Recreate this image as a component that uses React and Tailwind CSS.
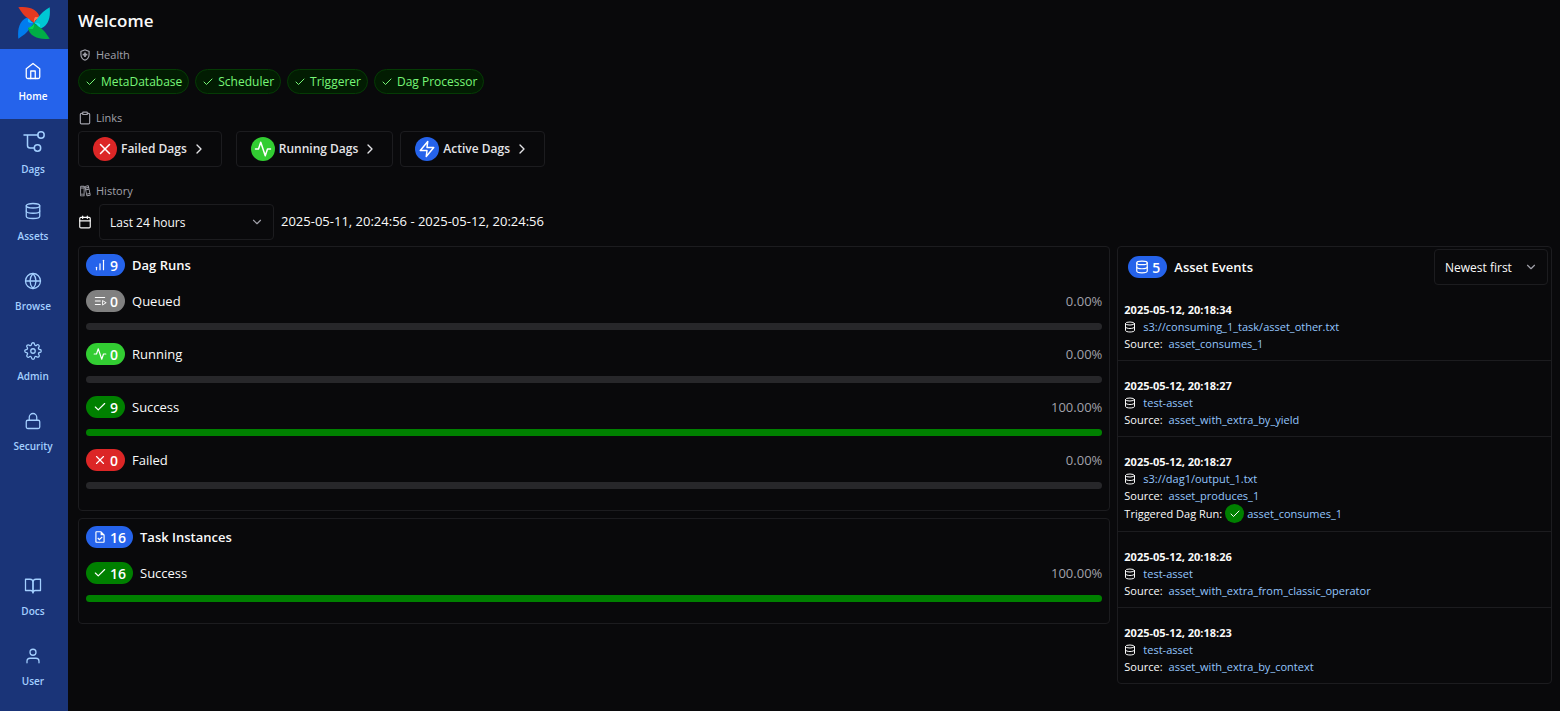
import React from "react";
import {
  FiHome,
  FiDatabase,
  FiGlobe,
  FiSettings,
  FiLock,
  FiBookOpen,
  FiUser,
  FiClipboard,
  FiX,
  FiActivity,
  FiZap,
  FiCheck,
  FiChevronRight,
  FiChevronDown,
  FiCalendar,
  FiBarChart,
} from "react-icons/fi";
import { MdOutlineHealthAndSafety, MdOutlineTask } from "react-icons/md";
import { PiBooks, PiQueue } from "react-icons/pi";

const blades = [
  { angle: 270, fill: "#017cee", tip: "#0cb6ff" },
  { angle: 0, fill: "#e43921", tip: "#ff7557" },
  { angle: 90, fill: "#00c7d4", tip: "#11e1ee" },
  { angle: 180, fill: "#00ad46", tip: "#04d659" },
];

const Logo = () => (
  <svg viewBox="0 0 96 96" className="size-8" aria-label="Airflow">
    {blades.map(({ angle, fill, tip }) => (
      <g key={angle} transform={`rotate(${angle} 48 48)`}>
        <path d="M1 1C20 -1 36 1 48 8C58 14 64 23 66 33C56 35 50 41 48 48C36 38 22 30 15 21C10 15 6 8 1 1Z" fill={fill} />
        <path d="M66 33C56 35 50 41 48 48C47 40 48 34 52 30C57 29 62 30 66 33Z" fill={tip} />
      </g>
    ))}
  </svg>
);

const DagIcon = ({ className }) => (
  <svg viewBox="0 0 24 24" fill="none" stroke="currentColor" strokeWidth="1.5" strokeLinecap="round" className={className}>
    <path d="M3 6h14M6.500 6v10.500a2.500 2.500 0 0 0 2.500 2.500h4" />
    <circle cx="20" cy="6" r="3.200" />
    <circle cx="16.500" cy="19" r="3.200" />
  </svg>
);

const mainNav = [
  { label: "Home", icon: FiHome, active: true },
  { label: "Dags", icon: DagIcon, large: true },
  { label: "Assets", icon: FiDatabase },
  { label: "Browse", icon: FiGlobe },
  { label: "Admin", icon: FiSettings },
  { label: "Security", icon: FiLock },
];

const footerNav = [
  { label: "Docs", icon: FiBookOpen },
  { label: "User", icon: FiUser },
];

const health = ["MetaDatabase", "Scheduler", "Triggerer", "Dag Processor"];

const links = [
  { label: "Failed Dags", icon: FiX, color: "bg-[#dc2626]", spacing: "mr-[7px]" },
  { label: "Running Dags", icon: FiActivity, color: "bg-[#32cd32]" },
  { label: "Active Dags", icon: FiZap, color: "bg-[#2563eb]" },
];

const dagRuns = [
  { label: "Queued", icon: PiQueue, count: 0, percent: 0, color: "bg-[#808080]" },
  { label: "Running", icon: FiActivity, count: 0, percent: 0, color: "bg-[#32cd32]" },
  { label: "Success", icon: FiCheck, count: 9, percent: 100, color: "bg-[#008000]" },
  { label: "Failed", icon: FiX, count: 0, percent: 0, color: "bg-[#dc2626]" },
];

const taskInstances = [
  { label: "Success", icon: FiCheck, count: 16, percent: 100, color: "bg-[#008000]" },
];

const assetEvents = [
  { time: "2025-05-12, 20:18:34", asset: "s3://consuming_1_task/asset_other.txt", source: "asset_consumes_1" },
  { time: "2025-05-12, 20:18:27", asset: "test-asset", source: "asset_with_extra_by_yield" },
  {
    time: "2025-05-12, 20:18:27",
    asset: "s3://dag1/output_1.txt",
    source: "asset_produces_1",
    triggered: "asset_consumes_1",
  },
  { time: "2025-05-12, 20:18:26", asset: "test-asset", source: "asset_with_extra_from_classic_operator" },
  { time: "2025-05-12, 20:18:23", asset: "test-asset", source: "asset_with_extra_by_context" },
];

const NavItem = ({ label, icon: Icon, active, large }) => (
  <a
    href="#"
    className={`flex h-[70px] flex-col items-center justify-center gap-2 pr-0.5 pb-0.5 text-[10px] leading-4 font-semibold ${
      active ? "bg-[#2563eb] text-white" : "text-[#a3cfff]"
    }`}
  >
    <Icon className={large ? "size-6" : "size-[18px] stroke-[1.7]"} />
    {label}
  </a>
);

const SectionLabel = ({ icon: Icon, children }) => (
  <h2 className="flex items-center gap-1 text-[11px] leading-4 font-medium text-[#a1a1aa]">
    <Icon className="size-3.5" />
    {children}
  </h2>
);

const Badge = ({ icon: Icon, count, color }) => (
  <span
    className={`flex h-[22px] items-center gap-[3px] rounded-full px-[7px] text-[14px] font-semibold text-white ${color}`}
  >
    <Icon className="size-3.5" />
    {count}
  </span>
);

const Select = ({ label, options, className }) => (
  <div className={`relative ${className}`}>
    <select
      aria-label={label}
      className="h-9 w-full appearance-none rounded border border-[#1c1c1f] bg-[#09090b] pt-0.5 pl-2.5 text-[12px] text-[#fafafa]"
    >
      {options.map((option) => (
        <option key={option}>{option}</option>
      ))}
    </select>
    <FiChevronDown className="pointer-events-none absolute top-[11px] right-2.5 size-3.5 text-[#a1a1aa]" />
  </div>
);

const MetricRow = ({ label, icon, count, percent, color }) => (
  <div>
    <div className="flex items-center justify-between">
      <div className="flex items-center gap-[7px]">
        <Badge icon={icon} count={count} color={color} />
        <span className="text-[13px] leading-[22px]">{label}</span>
      </div>
      <span className="text-[13px] leading-[22px] text-[#a1a1aa]">{percent.toFixed(2)}%</span>
    </div>
    <div className="mt-[11px] h-[7px] overflow-hidden rounded-full bg-[#27272a]">
      <div className={`h-full ${color}`} style={{ width: `${percent}%` }} />
    </div>
  </div>
);

const MetricPanel = ({ title, icon, count, rows }) => (
  <section className="rounded border border-[#1c1c1f] px-[7px] pt-[7px] pb-[21px]">
    <div className="flex items-center gap-[7px]">
      <Badge icon={icon} count={count} color="bg-[#2563eb]" />
      <h3 className="text-[13px] leading-[22px] font-semibold">{title}</h3>
    </div>
    <div className="mt-3.5 flex flex-col gap-[13px]">
      {rows.map((row) => (
        <MetricRow key={row.label} {...row} />
      ))}
    </div>
  </section>
);

const AssetEvent = ({ time, asset, source, triggered }) => (
  <li className="border-b border-[#1c1c1f] px-1.5 pt-4 pb-2 text-[11px] leading-[17px] last:border-b-0">
    <p className="font-bold">{time}</p>
    <p className="flex items-center gap-[7px]">
      <FiDatabase className="size-3" />
      <a href="#" className="text-[#93c5fd]">{asset}</a>
    </p>
    <p className="flex gap-1.5">
      Source:
      <a href="#" className="text-[#93c5fd]">{source}</a>
    </p>
    {triggered && (
      <p className="flex items-center gap-[3px]">
        Triggered Dag Run:
        <span className="flex size-[19px] items-center justify-center rounded-full bg-[#008000]">
          <FiCheck className="size-3" />
        </span>
        <a href="#" className="text-[#93c5fd]">{triggered}</a>
      </p>
    )}
  </li>
);

const App = () => (
  <div className="flex min-h-screen bg-[#09090b] font-['Open_Sans','Noto_Sans',sans-serif] text-[#fafafa]">
    <nav className="flex w-[68px] shrink-0 flex-col justify-between bg-[#1a3478] pb-[7px]">
      <div>
        <a href="#" className="flex h-[49px] items-center justify-center pb-[3px]">
          <Logo />
        </a>
        {mainNav.map((item) => (
          <NavItem key={item.label} {...item} />
        ))}
      </div>
      <div>
        {footerNav.map((item) => (
          <NavItem key={item.label} {...item} />
        ))}
      </div>
    </nav>

    <main className="min-w-0 flex-1 pt-2 pr-2 pb-5 pl-2.5">
      <h1 className="text-[17px] leading-[26px] font-semibold">Welcome</h1>

      {/* Health */}
      <section className="mt-[13px]">
        <SectionLabel icon={MdOutlineHealthAndSafety}>Health</SectionLabel>
        <ul className="mt-1.5 flex flex-wrap gap-1.5">
          {health.map((name) => (
            <li
              key={name}
              className="flex h-[25px] items-center gap-1 rounded-full border border-[#053b05] bg-[#021c02] px-1.5 text-[12px] font-medium text-[#77f777]"
            >
              <FiCheck className="size-3" />
              {name}
            </li>
          ))}
        </ul>
      </section>

      {/* Links */}
      <section className="mt-4">
        <SectionLabel icon={FiClipboard}>Links</SectionLabel>
        <div className="mt-[5px] flex flex-wrap gap-[7px]">
          {links.map(({ label, icon: Icon, color, spacing }) => (
            <a
              key={label}
              href="#"
              className={`flex h-9 items-center gap-1 rounded border border-[#1c1c1f] px-3.5 text-[12px] font-semibold text-[#e4e4e7] ${spacing || ""}`}
            >
              <span className={`flex size-6 items-center justify-center rounded-full text-white ${color}`}>
                <Icon className="size-[18px]" />
              </span>
              {label}
              <FiChevronRight className="size-4" />
            </a>
          ))}
        </div>
      </section>

      {/* History */}
      <section className="mt-4">
        <SectionLabel icon={PiBooks}>History</SectionLabel>
        <div className="mt-[5px] flex items-center gap-[7px]">
          <FiCalendar className="size-3.5" />
          <Select
            label="Time range"
            options={["Last 24 hours", "Last week", "Last month"]}
            className="w-[175px]"
          />
          <span className="text-[13px]">2025-05-11, 20:24:56 - 2025-05-12, 20:24:56</span>
        </div>
      </section>

      <div className="mt-1.5 grid grid-cols-[19fr_8fr] items-start gap-[7px]">
        <div className="flex flex-col gap-[7px]">
          <MetricPanel title="Dag Runs" icon={FiBarChart} count={9} rows={dagRuns} />
          <MetricPanel title="Task Instances" icon={MdOutlineTask} count={16} rows={taskInstances} />
        </div>

        <section className="rounded border border-[#1c1c1f]">
          <div className="flex items-center justify-between pt-0.5 pr-[3px] pl-2.5">
            <div className="flex items-center gap-[7px]">
              <Badge icon={FiDatabase} count={5} color="bg-[#2563eb]" />
              <h3 className="text-[13px] leading-[22px] font-semibold">Asset Events</h3>
            </div>
            <Select label="Sort order" options={["Newest first", "Oldest first"]} className="w-[114px]" />
          </div>
          <ul>
            {assetEvents.map((event, i) => (
              <AssetEvent key={i} {...event} />
            ))}
          </ul>
        </section>
      </div>
    </main>
  </div>
);

export default App;
